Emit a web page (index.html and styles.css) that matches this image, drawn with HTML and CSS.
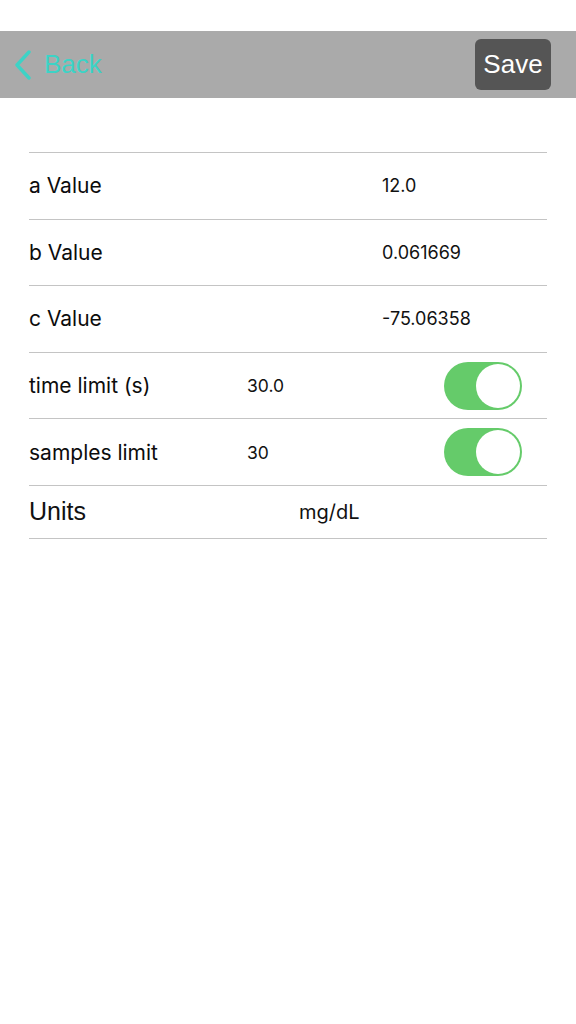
FILE: index.html
```html
<!DOCTYPE html>
<html>
<head>
<meta charset="utf-8">
<link rel="stylesheet" href="styles.css">
</head>
<body>
<div class="nav">
  <div class="back">
    <svg class="chev" width="20" height="30" viewBox="0 0 20 30"><path d="M16 2 L4 15 L16 28" fill="none" stroke="#3cd3c6" stroke-width="3.4" stroke-linecap="round" stroke-linejoin="round"/></svg>
    <span>Back</span>
  </div>
  <div class="save">Save</div>
</div>
<div class="list">
  <div class="row"><span class="label">a Value</span><span class="val">12.0</span></div>
  <div class="row"><span class="label">b Value</span><span class="val">0.061669</span></div>
  <div class="row"><span class="label">c Value</span><span class="val">-75.06358</span></div>
  <div class="row"><span class="label">time limit (s)</span><span class="mid">30.0</span><span class="toggle"><span class="knob"></span></span></div>
  <div class="row"><span class="label">samples limit</span><span class="mid">30</span><span class="toggle"><span class="knob"></span></span></div>
  <div class="row units"><span class="ulabel">Units</span><span class="uval">mg/dL</span></div>
</div>
</body>
</html>
```
FILE: styles.css
```css
html, body { margin: 0; padding: 0; background: #fff; }
body { font-family: Inter, "Noto Sans", sans-serif; color: #111; }
.nav {
  margin-top: 31px;
  height: 67px;
  background: #aaaaaa;
  display: flex;
  align-items: center;
  justify-content: space-between;
  padding: 0 25px 0 13px;
}
.back { display: flex; align-items: center; gap: 11px; color: #3cd3c6; font-size: 26px; font-family: "Liberation Sans", Arial, sans-serif; }
.chev { display: block; }
.save {
  background: #555555;
  color: #fff;
  border-radius: 6px;
  width: 76px;
  height: 51px;
  display: flex;
  align-items: center;
  justify-content: center;
  font-size: 26px;
  font-family: "Liberation Sans", Arial, sans-serif;
}
.list { margin: 54px 29px 0 29px; border-top: 1px solid #c4c4c4; }
.row {
  height: 65.6px;
  border-bottom: 1px solid #c4c4c4;
  display: flex;
  align-items: center;
}
.label { font-size: 21px; font-weight: 400; width: 218px; flex: none; color: #0c0c0c; }
.val { font-size: 18px; margin-left: 135px; }
.mid { font-size: 17.5px; flex: 1; }
.toggle {
  width: 78px; height: 48px; border-radius: 24px; background: #65cb6a;
  margin-right: 25px; position: relative; flex: none;
}
.knob {
  position: absolute; right: 2px; top: 2px; width: 44px; height: 44px;
  border-radius: 50%; background: #fff;
}
.units { height: 52px; }
.ulabel { font-size: 25px; width: 270px; flex: none; font-family: "Liberation Sans", Arial, sans-serif; }
.uval { font-size: 20px; }
```
